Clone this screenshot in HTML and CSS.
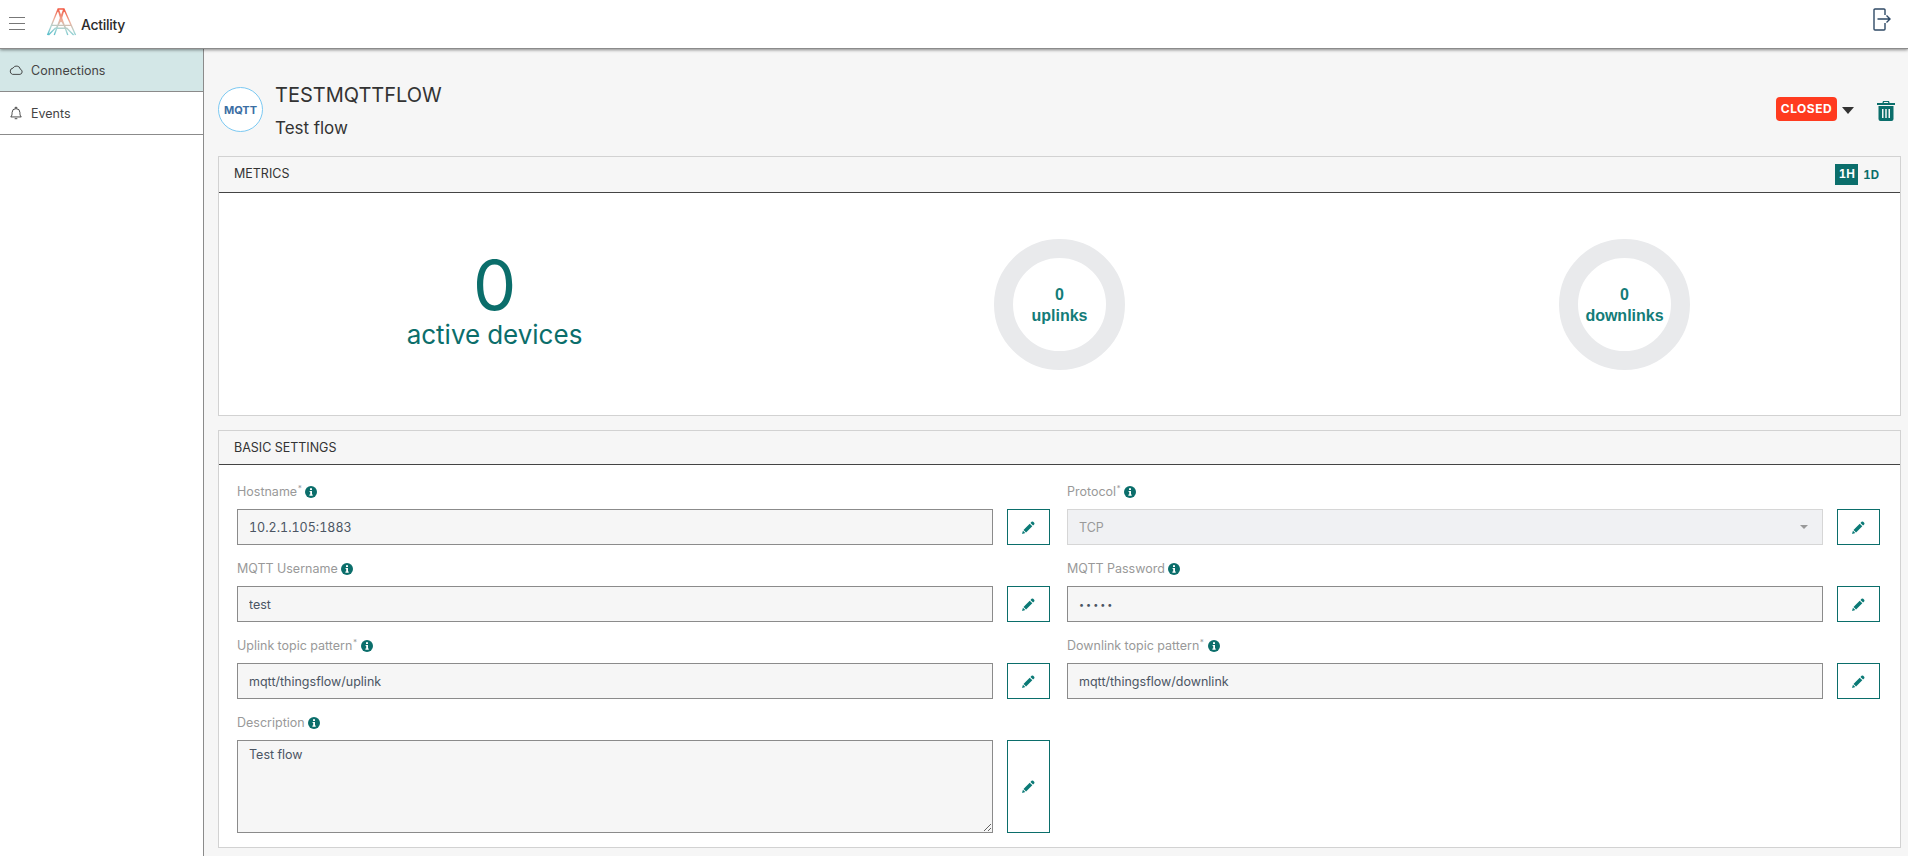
FILE: index.html
```html
<!doctype html>
<html lang="en">
<head>
    <meta charset="UTF-8">
    <title>TESTMQTTFLOW</title>
    <link rel="stylesheet" href="styles.css">
</head>
<body>

<!-- Top bar -->
<header class="topbar">
    <div class="topbar-left">
        <button class="burger" aria-label="Menu"><span></span><span></span><span></span></button>
        <svg class="logo-mark" viewBox="0 0 32 30" fill="none" stroke-width="1.400">
            <defs>
                <linearGradient id="logoGrad" gradientUnits="userSpaceOnUse" x1="18" y1="0" x2="12" y2="29">
                    <stop offset="0" stop-color="#f2503a"/>
                    <stop offset="0.45" stop-color="#eeb09c"/>
                    <stop offset="0.75" stop-color="#a9d6d4"/>
                    <stop offset="1" stop-color="#5fc0cc"/>
                </linearGradient>
            </defs>
            <path stroke="url(#logoGrad)" d="M1 28 L12 1 H18 L30 28 M12 1 L22 28 M18 1 L8 28 M5 18 L26 18 M2 28 L9 21 H21 L28 28 M12 1 L15 12 L18 1 M15 12 L10 21 M15 12 L20 21"/>
        </svg>
        <span class="logo-text">Actility</span>
    </div>
    <svg class="logout" viewBox="0 0 18 23" fill="none" stroke="#2f4a66" stroke-width="1.400">
        <path d="M12 7 V2 Q12 1 11 1 H2 Q1 1 1 2 V21 Q1 22 2 22 H11 Q12 22 12 21 V15"/>
        <path d="M4.500 11 H17 M13.500 7.500 L17 11 L13.500 14.500"/>
    </svg>
</header>

<div class="layout">
    <!-- Side menu -->
    <nav class="sidebar">
        <a class="nav-item active">
            <svg class="nav-icon" viewBox="0 0 16 12" fill="none" stroke="#333" stroke-width="1">
                <path d="M4 11 H12.500 A3 3 0 0 0 13 5.200 A4.500 4.500 0 0 0 4.600 3.800 A3.700 3.700 0 0 0 4 11 Z"/>
            </svg>
            Connections
        </a>
        <a class="nav-item">
            <svg class="nav-icon" viewBox="0 0 16 16" fill="none" stroke="#333" stroke-width="1">
                <path d="M2 12.500 H14 C12.500 11 12.500 9.500 12.500 7.500 A4.500 4.500 0 0 0 3.500 7.500 C3.500 9.500 3.500 11 2 12.500 Z"/>
                <path d="M7 2.800 V1.500 H9 V2.800 M6.500 14.500 H9.500"/>
            </svg>
            Events
        </a>
    </nav>

    <main class="content">
        <!-- Connection title -->
        <section class="title-row">
            <div class="mqtt-logo">MQTT</div>
            <div class="title-text">
                <h1>TESTMQTTFLOW</h1>
                <p>Test flow</p>
            </div>
            <div class="title-actions">
                <span class="badge-closed">CLOSED</span>
                <span class="caret"></span>
                <svg class="trash" viewBox="0 0 18 20" fill="#0b6e6b">
                    <path d="M6 0 H12 L12.600 2 H18 V4 H0 V2 H5.400 Z M7 1 L6.700 2 H11.300 L11 1 Z"/>
                    <path fill-rule="evenodd" d="M1.500 5 H16.500 V18 Q16.500 20 14.500 20 H3.500 Q1.500 20 1.500 18 Z M5 8 V17 H6.500 V8 Z M8.250 8 V17 H9.750 V8 Z M11.500 8 V17 H13 V8 Z"/>
                </svg>
            </div>
        </section>

        <!-- Metrics -->
        <section class="panel">
            <div class="panel-head panel-head-tall">
                <span>METRICS</span>
                <div class="range">
                    <span class="range-btn on">1H</span>
                    <span class="range-btn">1D</span>
                </div>
            </div>
            <div class="metrics">
                <div class="metric-big">
                    <div class="big-num">0</div>
                    <div class="big-label">active devices</div>
                </div>
                <div class="metric-ring"><div class="ring">0<br>uplinks</div></div>
                <div class="metric-ring"><div class="ring">0<br>downlinks</div></div>
            </div>
        </section>

        <!-- Settings -->
        <section class="panel">
            <div class="panel-head"><span>BASIC SETTINGS</span></div>
            <div class="form">
                <div class="field">
                    <label>Hostname<sup>*</sup><svg class="info"><use href="#i-info"/></svg></label>
                    <div class="field-row">
                        <input type="text" value="10.2.1.105:1883">
                        <button class="edit"><svg class="pen"><use href="#i-pen"/></svg></button>
                    </div>
                </div>
                <div class="field">
                    <label>Protocol<sup>*</sup><svg class="info"><use href="#i-info"/></svg></label>
                    <div class="field-row">
                        <div class="select">TCP<span class="select-caret"></span></div>
                        <button class="edit"><svg class="pen"><use href="#i-pen"/></svg></button>
                    </div>
                </div>
                <div class="field">
                    <label>MQTT Username<svg class="info"><use href="#i-info"/></svg></label>
                    <div class="field-row">
                        <input type="text" value="test">
                        <button class="edit"><svg class="pen"><use href="#i-pen"/></svg></button>
                    </div>
                </div>
                <div class="field">
                    <label>MQTT Password<svg class="info"><use href="#i-info"/></svg></label>
                    <div class="field-row">
                        <input class="password" type="password" value="abcde">
                        <button class="edit"><svg class="pen"><use href="#i-pen"/></svg></button>
                    </div>
                </div>
                <div class="field">
                    <label>Uplink topic pattern<sup>*</sup><svg class="info"><use href="#i-info"/></svg></label>
                    <div class="field-row">
                        <input type="text" value="mqtt/thingsflow/uplink">
                        <button class="edit"><svg class="pen"><use href="#i-pen"/></svg></button>
                    </div>
                </div>
                <div class="field">
                    <label>Downlink topic pattern<sup>*</sup><svg class="info"><use href="#i-info"/></svg></label>
                    <div class="field-row">
                        <input type="text" value="mqtt/thingsflow/downlink">
                        <button class="edit"><svg class="pen"><use href="#i-pen"/></svg></button>
                    </div>
                </div>
                <div class="field">
                    <label>Description<svg class="info"><use href="#i-info"/></svg></label>
                    <div class="field-row">
                        <textarea>Test flow</textarea>
                        <button class="edit"><svg class="pen"><use href="#i-pen"/></svg></button>
                    </div>
                </div>
            </div>
        </section>
    </main>
</div>

<!-- Shared icons -->
<svg class="sprites">
    <symbol id="i-info" viewBox="0 0 12 12">
        <circle cx="6" cy="6" r="6" fill="#0b6e6b"/>
        <path fill="#fff" d="M5 2.300 H7 V3.900 H5 Z M4.600 5 H7 V8.600 H7.700 V9.700 H4.400 V8.600 H5.200 V6.100 H4.600 Z"/>
    </symbol>
    <symbol id="i-pen" viewBox="0 0 14 14">
        <path fill="#0b7a76" d="M10.300 0.900 Q11.200 0.100 12.100 0.900 L13.100 1.900 Q13.900 2.800 13.100 3.700 L11.900 4.900 L9.100 2.100 Z M8.300 2.900 L11.100 5.700 L4.400 12.400 L1.600 9.600 Z M1 10.400 L3.600 13 L0 14 Z"/>
    </symbol>
</svg>

</body>
</html>
```

FILE: styles.css
```css
* {
    box-sizing: border-box;
}
html, body {
    height: 100%;
}
body {
    margin: 0;
    font-family: Inter, "Liberation Sans", sans-serif;
    font-variant-numeric: tabular-nums;
    color: #333;
    background-color: #f6f6f6;
    overflow: hidden;
}
.sprites {
    display: none;
}

/* top bar */
.topbar {
    height: 49px;
    background-color: #fff;
    display: flex;
    align-items: center;
    justify-content: space-between;
    padding: 0 17px 0 9px;
    border-bottom: 1px solid #8b8b8b;
    box-shadow: 0 1px 3px rgba(0, 0, 0, 0.45);
    position: relative;
}
.topbar-left {
    display: flex;
    align-items: center;
}
.burger {
    width: 16px;
    height: 13px;
    padding: 0;
    border: none;
    background: none;
    display: flex;
    flex-direction: column;
    justify-content: space-between;
    margin-bottom: 2px;
}
.burger span {
    display: block;
    height: 1px;
    background-color: #777;
}
.logo-mark {
    width: 32px;
    height: 29px;
    margin-left: 21px;
    margin-bottom: 4px;
}
.logo-text {
    font-size: 14px;
    font-weight: 500;
    letter-spacing: -0.3px;
    color: #2b2b2b;
    margin-left: 3px;
    margin-top: 1px;
}
.logout {
    width: 18px;
    height: 23px;
    margin-bottom: 9px;
}

.layout {
    display: flex;
    height: calc(100% - 49px);
}

/* side menu */
.sidebar {
    width: 204px;
    flex-shrink: 0;
    background-color: #fff;
    border-right: 1px solid #8b8b8b;
}
.nav-item {
    display: flex;
    align-items: center;
    gap: 8px;
    height: 43px;
    padding-left: 9px;
    font-size: 12.500px;
    color: #444;
    border-bottom: 1px solid #8b8b8b;
}
.nav-item.active {
    background-color: #d3e7e7;
}
.nav-icon {
    width: 14px;
    height: 14px;
}

/* main */
.content {
    flex: 1;
    min-width: 0;
    padding: 0 7px 0 14px;
}
.title-row {
    display: flex;
    align-items: flex-start;
    height: 107px;
    padding-top: 38px;
}
.mqtt-logo {
    width: 45px;
    height: 45px;
    border-radius: 50%;
    border: 1px solid #7cc9f2;
    background-color: #fff;
    color: #3b6ea3;
    font-size: 11px;
    font-weight: 700;
    display: flex;
    align-items: center;
    justify-content: center;
}
.title-text {
    margin-left: 12px;
}
.title-text h1 {
    margin: -5px 0 0;
    font-size: 20px;
    line-height: 26px;
    font-weight: 400;
    color: #333;
}
.title-text p {
    margin: 8px 0 0;
    font-size: 17px;
    line-height: 24px;
    color: #333;
}
.title-actions {
    margin-left: auto;
    display: flex;
    align-items: center;
    padding-top: 10px;
    padding-right: 6px;
}
.badge-closed {
    background-color: #ff3b1f;
    color: #fff;
    font-size: 12px;
    font-weight: 700;
    letter-spacing: 0.5px;
    border-radius: 4px;
    width: 61px;
    height: 24px;
    line-height: 24px;
    text-align: center;
}
.caret {
    width: 0;
    height: 0;
    margin-left: 5px;
    margin-top: 2px;
    border-left: 6px solid transparent;
    border-right: 6px solid transparent;
    border-top: 7px solid #333;
}
.trash {
    width: 18px;
    height: 20px;
    margin-left: 23px;
    margin-top: 3px;
}

/* panels */
.panel {
    background-color: #fff;
    border: 1px solid #d2d2d2;
    margin-bottom: 14px;
}
.panel-head {
    height: 34px;
    background-color: #f6f6f6;
    border-bottom: 1px solid #444;
    display: flex;
    align-items: center;
    justify-content: space-between;
    padding: 0 15px;
    font-size: 12.500px;
    color: #333;
}
.panel-head-tall {
    height: 36px;
    padding-bottom: 2px;
}
.range {
    display: flex;
    align-items: center;
    gap: 5px;
    margin-right: 6px;
    margin-top: 2px;
}
.range-btn {
    font-size: 11.500px;
    font-weight: 700;
    color: #0b6e6b;
}
.range-btn.on {
    width: 23px;
    height: 21px;
    line-height: 21px;
    text-align: center;
    background-color: #0b6e6b;
    color: #fff;
}

/* metrics */
.metrics {
    height: 222px;
    display: grid;
    grid-template-columns: repeat(3, 565px);
    justify-content: center;
    align-items: center;
}
.metric-big {
    text-align: center;
    color: #0b6e6b;
}
.big-num {
    font-size: 69px;
    line-height: 52px;
    font-weight: 400;
}
.big-label {
    font-size: 26px;
    line-height: 30px;
    font-weight: 400;
    margin-top: 9px;
}
.metric-ring {
    display: flex;
    justify-content: center;
}
.ring {
    width: 131px;
    height: 131px;
    border-radius: 50%;
    border: 19px solid #e9eaec;
    padding-top: 2px;
    display: flex;
    flex-direction: column;
    align-items: center;
    justify-content: center;
    text-align: center;
    font-family: "Liberation Sans", Arial, sans-serif;
    font-size: 16px;
    line-height: 21px;
    font-weight: 700;
    color: #137c78;
}

/* form */
.form {
    display: grid;
    grid-template-columns: 1fr 1fr;
    column-gap: 17px;
    padding: 15px 20px 14px 18px;
}
.field label {
    display: flex;
    align-items: center;
    height: 23px;
    font-size: 12.500px;
    color: #999;
    margin-bottom: 6px;
}
.field label sup {
    font-size: 8px;
    line-height: 1;
    align-self: flex-start;
    margin-top: 4px;
}
.info {
    width: 12px;
    height: 12px;
    margin-left: 3px;
}
.field-row {
    display: flex;
    gap: 14px;
    margin-bottom: 12px;
}
.field:last-child .field-row {
    margin-bottom: 0;
}
.field input,
.field textarea,
.select {
    flex: 1;
    min-width: 0;
    height: 36px;
    padding: 0 11px;
    border: 1px solid #8b8b8b;
    border-radius: 0;
    background-color: #f6f6f6;
    font-family: Inter, "Liberation Sans", sans-serif;
    font-size: 12.500px;
    font-variant-numeric: tabular-nums;
    color: #4b5563;
    outline: none;
}
.field input.password {
    font-size: 9px;
    letter-spacing: 2px;
}
.field textarea {
    height: 93px;
    padding-top: 6px;
    line-height: 16px;
}
.select {
    display: flex;
    align-items: center;
    justify-content: space-between;
    background-color: #f0f1f3;
    border-color: #d6d6d6;
    color: #999;
}
.select-caret {
    width: 0;
    height: 0;
    margin-right: 3px;
    border-left: 4px solid transparent;
    border-right: 4px solid transparent;
    border-top: 4px solid #999;
}
.edit {
    width: 43px;
    flex-shrink: 0;
    padding: 0;
    border: 1px solid #0b6e6b;
    background-color: #fff;
    display: flex;
    align-items: center;
    justify-content: center;
}
.pen {
    width: 13px;
    height: 13px;
}
```
